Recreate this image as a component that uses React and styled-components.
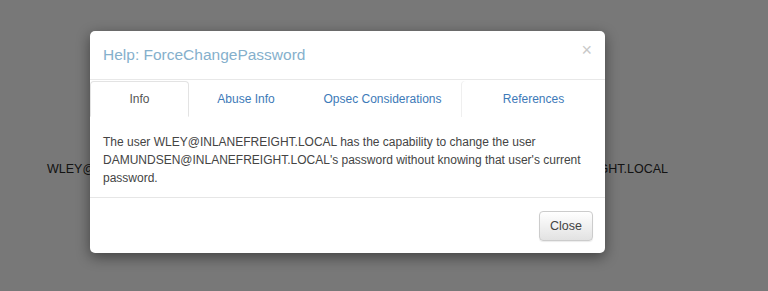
import React, { useState } from 'react';
import styled, { createGlobalStyle } from 'styled-components';

const GlobalStyle = createGlobalStyle`
  html, body {
    margin: 0;
    padding: 0;
    background: #fff;
    font-family: "Liberation Sans", Arial, sans-serif;
  }
`;

const Page = styled.div`
  position: relative;
  width: 768px;
  height: 291px;
  overflow: hidden;
  background: #fff;
`;

const EdgeLabels = styled.div`
  display: flex;
  justify-content: space-between;
  padding: 162px 100px 0 47px;
  font-size: 12.5px;
  color: #2a2a2a;
`;

const Backdrop = styled.div`
  position: absolute;
  inset: 0;
  background: rgba(0, 0, 0, 0.53);
  padding: 31px 0 0 90px;
`;

const Dialog = styled.div`
  width: 515px;
  background: #fff;
  border-radius: 5px;
  box-shadow: 0 4px 14px rgba(0, 0, 0, 0.45);
  overflow: hidden;
`;

const Header = styled.div`
  display: flex;
  justify-content: space-between;
  align-items: center;
  height: 48px;
  padding: 0 13px;
  border-bottom: 1px solid #e8e8e8;
`;

const Title = styled.h4`
  margin: 0;
  font-size: 15.5px;
  font-weight: normal;
  color: #85b0cc;
`;

const CloseX = styled.button`
  border: 0;
  background: none;
  padding: 0;
  margin: -10px 0 0 0;
  font-size: 18px;
  line-height: 1;
  color: #c8c8c8;
  font-family: "Liberation Sans", Arial, sans-serif;
  cursor: pointer;
`;

const Tabs = styled.div`
  display: grid;
  grid-template-columns: 99px 114px 159px 1fr;
  height: 35px;
  margin-top: 1px;
  border-bottom: 1px solid #e6e6e6;
`;

const Tab = styled.div`
  display: flex;
  align-items: center;
  justify-content: center;
  font-size: 12px;
  color: ${p => (p.$active ? '#555' : '#3d7ab8')};
  background: #fff;
  border: 1px solid ${p => (p.$active ? '#e3e3e3' : 'transparent')};
  border-bottom-color: ${p => (p.$active ? '#fff' : 'transparent')};
  border-radius: 4px 4px 0 0;
  margin-bottom: -1px;
  box-shadow: ${p => (p.$divider ? '-1px 0 0 #efefef' : 'none')};
  cursor: pointer;
`;

const Body = styled.div`
  padding: 16px 13px 10px;
  font-size: 12px;
  line-height: 18px;
  color: #444;
  border-bottom: 1px solid #e6e6e6;
`;

const Footer = styled.div`
  display: flex;
  justify-content: flex-end;
  padding: 13px 12px 12px;
`;

const Button = styled.button`
  width: 54px;
  height: 30px;
  border: 1px solid #ccc;
  border-radius: 4px;
  background: linear-gradient(to bottom, #fff 0%, #e2e2e2 100%);
  box-shadow: 0 1px 1px rgba(0, 0, 0, 0.08);
  font-family: "Liberation Sans", Arial, sans-serif;
  font-size: 12.5px;
  color: #444;
  cursor: pointer;
`;

const tabNames = ['Info', 'Abuse Info', 'Opsec Considerations', 'References'];

export default function App() {
  const [active, setActive] = useState(0);

  return (
    <>
      <GlobalStyle />
      <Page>
        <EdgeLabels>
          <span>WLEY@INLANEFREIGHT.LOCAL</span>
          <span>DAMUNDSEN@INLANEFREIGHT.LOCAL</span>
        </EdgeLabels>
        <Backdrop>
          <Dialog>
            <Header>
              <Title>Help: ForceChangePassword</Title>
              <CloseX>×</CloseX>
            </Header>
            <Tabs>
              {tabNames.map((name, i) => (
                <Tab
                  key={name}
                  $active={i === active}
                  $divider={i === 3}
                  onClick={() => setActive(i)}
                >
                  {name}
                </Tab>
              ))}
            </Tabs>
            <Body>
              The user WLEY@INLANEFREIGHT.LOCAL has the capability to change the user
              DAMUNDSEN@INLANEFREIGHT.LOCAL's password without knowing that user's current
              password.
            </Body>
            <Footer>
              <Button>Close</Button>
            </Footer>
          </Dialog>
        </Backdrop>
      </Page>
    </>
  );
}
